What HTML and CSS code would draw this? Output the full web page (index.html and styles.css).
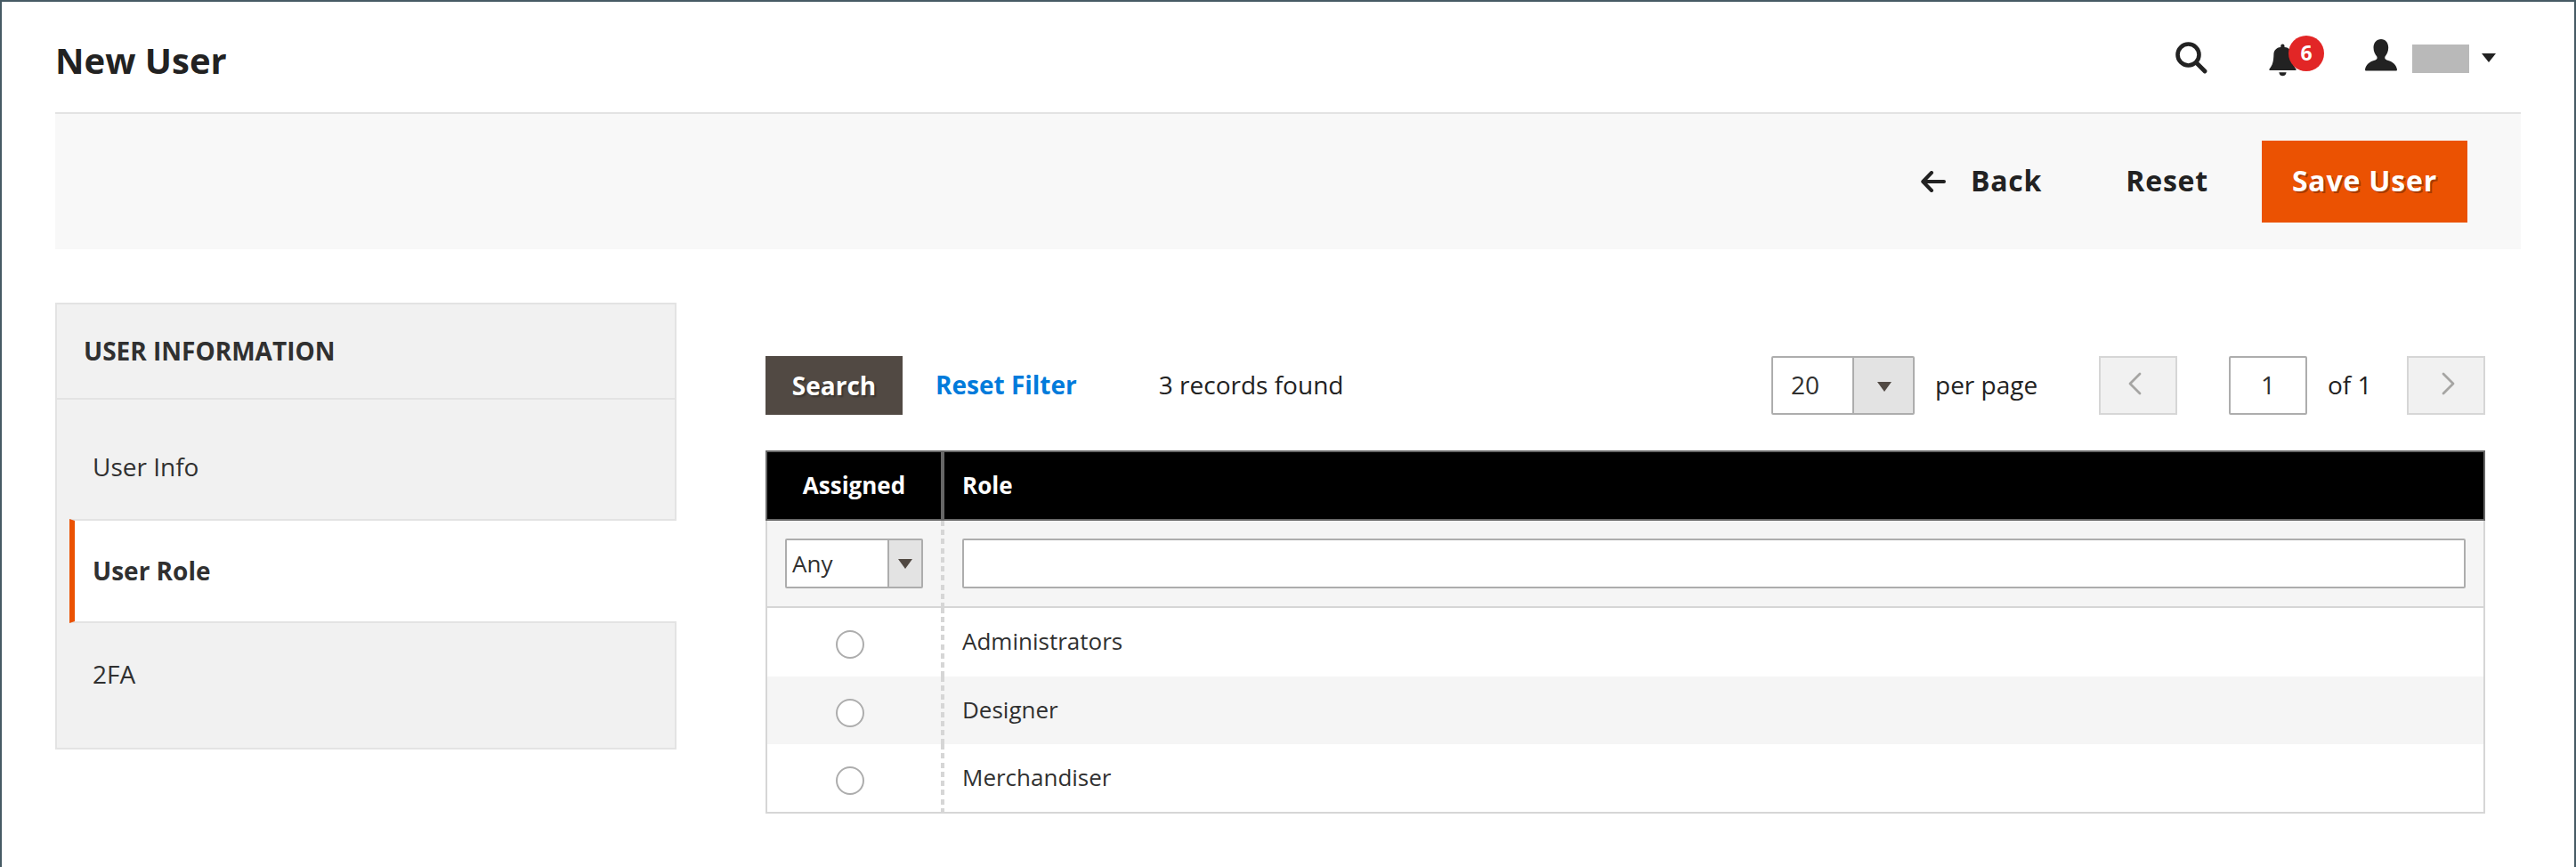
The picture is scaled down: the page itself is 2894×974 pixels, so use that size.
FILE: index.html
```html
<!DOCTYPE html>
<html lang="en">
<head>
<meta charset="utf-8">
<title>New User</title>
<link rel="stylesheet" href="styles.css">
</head>
<body>
<div class="page">
  <header class="header">
    <h1 class="title">New User</h1>
    <div class="tools">
      <svg class="icon-search" viewBox="0 0 36 36"><circle cx="14.5" cy="14.5" r="12" fill="none" stroke="currentColor" stroke-width="4.6"/><path d="M23.5 23.5L33 33" stroke="currentColor" stroke-width="4.8" stroke-linecap="round"/></svg>
      <div class="bell">
        <svg class="icon-bell" viewBox="0 0 32 37"><path d="M13.3 4V2.2Q13.3 0.5 15.4 0.5T17.5 2.2V4C23 4.4 25.3 8 25.5 12C25.8 20 27 24.500 30.500 28.500V30H0.500V28.500C4 24.500 5.200 20 5.400 12C5.600 8 8 4.400 13.300 4Z" fill="currentColor"/><path d="M11.300 32.200H19.600C19 35.200 17.500 36.200 15.400 36.200S12 35.200 11.300 32.200Z" fill="currentColor"/></svg>
        <span class="badge">6</span>
      </div>
      <svg class="icon-user" viewBox="0 0 36 36"><path d="M18 0C23 0 26.200 4 26.200 9.500C26.200 14 24.500 17 22.500 19.500C21.800 21.500 22.500 22.800 24.500 23.500C31 25 35.500 29 36 34.500Q36 35.500 35 35.500H1Q0 35.500 0 34.500C0.500 29 5 25 11.500 23.500C13.500 22.800 14 21.500 13.300 19.500C11.300 17 9.500 14 9.500 9.500C9.500 4 13 0 18 0Z" fill="currentColor"/></svg>
      <span class="username"></span>
      <svg class="caret" viewBox="0 0 16 10"><path d="M0 0H16L8 10Z" fill="currentColor"/></svg>
    </div>
  </header>

  <div class="actions">
    <button class="action back"><svg class="icon-back" viewBox="0 0 28 24"><path d="M12 2L2.300 12L12 22M3 12H26" fill="none" stroke="currentColor" stroke-width="4" stroke-linecap="round" stroke-linejoin="round"/></svg>Back</button>
    <button class="action reset">Reset</button>
    <button class="action save">Save User</button>
  </div>

  <div class="columns">
    <nav class="side">
      <div class="side-title">USER INFORMATION</div>
      <div class="side-list">
        <a class="side-item">User Info</a>
        <a class="side-item active">User Role</a>
        <a class="side-item">2FA</a>
      </div>
    </nav>

    <main class="main">
      <div class="toolbar">
        <button class="search">Search</button>
        <a class="reset-filter">Reset Filter</a>
        <span class="records">3 records found</span>
        <div class="pager">
          <div class="select limit"><span class="value">20</span><span class="arrow"><svg class="tri" viewBox="0 0 16 11"><path d="M0 0H16L8 11Z" fill="currentColor"/></svg></span></div>
          <span class="per-page">per page</span>
          <button class="nav prev"><svg class="chevron" viewBox="0 0 15 26"><path d="M13 2L2 13L13 24" fill="none" stroke="currentColor" stroke-width="2.800" stroke-linecap="round" stroke-linejoin="round"/></svg></button>
          <span class="current">1</span>
          <span class="of">of 1</span>
          <button class="nav next"><svg class="chevron" viewBox="0 0 15 26"><path d="M2 2L13 13L2 24" fill="none" stroke="currentColor" stroke-width="2.800" stroke-linecap="round" stroke-linejoin="round"/></svg></button>
        </div>
      </div>

      <div class="grid">
        <div class="row head"><div class="cell assigned">Assigned</div><div class="cell">Role</div></div>
        <div class="row filter">
          <div class="cell"><div class="select any"><span class="value">Any</span><span class="arrow"><svg class="tri" viewBox="0 0 16 11"><path d="M0 0H16L8 11Z" fill="currentColor"/></svg></span></div></div>
          <div class="cell"><span class="field"></span></div>
        </div>
        <div class="row first"><div class="cell pick"><span class="radio"></span></div><div class="cell">Administrators</div></div>
        <div class="row even"><div class="cell pick"><span class="radio"></span></div><div class="cell">Designer</div></div>
        <div class="row last"><div class="cell pick"><span class="radio"></span></div><div class="cell">Merchandiser</div></div>
      </div>
    </main>
  </div>
</div>
</body>
</html>
```
FILE: styles.css
```css
* { box-sizing: border-box; }

body {
  margin: 0;
  background: #fff;
  font-family: "Open Sans", "Noto Sans", sans-serif;
  font-size: 28px;
  color: #303030;
}

button {
  margin: 0;
  padding: 0;
  border: 0;
  background: none;
  font: inherit;
  color: inherit;
}

svg { display: block; flex: none; }

.page {
  width: 2894px;
  height: 974px;
  border: 2px solid #465a64;
  border-bottom: 0;
  padding: 0 60px;
  overflow: hidden;
}

/* Header */
.header {
  display: flex;
  justify-content: space-between;
  height: 124px;
  color: #222;
}
.title {
  margin: 0;
  padding-top: 6px;
  font-size: 40px;
  font-weight: 700;
  line-height: 120px;
}
.tools {
  display: flex;
  align-items: flex-start;
  padding-right: 28px;
}
.icon-search { width: 36px; height: 36px; margin-top: 45px; }
.bell { position: relative; margin: 47px 0 0 69px; width: 62px; height: 37px; }
.icon-bell { width: 32px; height: 37px; }
.badge {
  position: absolute;
  left: 22px;
  top: -9px;
  width: 40px;
  height: 40px;
  border-radius: 50%;
  background: #e22626;
  color: #fff;
  font-size: 23px;
  font-weight: 700;
  line-height: 39px;
  text-align: center;
}
.icon-user { width: 36px; height: 36px; margin: 42px 0 0 46px; }
.username { width: 64px; height: 32px; margin: 48px 0 0 17px; background: #b9b9b9; }
.caret { width: 16px; height: 10px; margin: 58px 0 0 14px; }

/* Page actions */
.actions {
  display: flex;
  justify-content: flex-end;
  height: 154px;
  padding: 30px 60px 0 0;
  border-top: 2px solid #e3e3e3;
  background: #f8f8f8;
}
.action {
  display: flex;
  align-items: center;
  height: 92px;
  padding-bottom: 3px;
  font-size: 32px;
  font-weight: 700;
  letter-spacing: 0.8px;
  color: #222;
}
.icon-back { width: 28px; height: 24px; margin: 2px 28px 0 0; }
.reset { margin: 0 60px 0 94px; }
.save {
  justify-content: center;
  width: 231px;
  background: #eb5202;
  color: #fff;
  text-shadow: 2px 2px 0 rgba(0, 0, 0, 0.3);
}

.columns {
  display: flex;
  align-items: flex-start;
  padding-top: 60px;
}

/* Sidebar */
.side {
  width: 698px;
  height: 502px;
  border: 2px solid #e3e3e3;
  background: #f1f1f1;
}
.side-title {
  height: 107px;
  padding-left: 30px;
  border-bottom: 2px solid #e3e3e3;
  font-weight: 700;
  line-height: 105px;
}
.side-list { padding: 18px 0 0 14px; margin-right: -2px; }
.side-item {
  display: block;
  height: 116px;
  padding-left: 26px;
  line-height: 115px;
}
.side-item.active {
  height: 117px;
  padding-left: 20px;
  border: solid #e3e3e3;
  border-width: 2px 0;
  background: #fff;
  font-weight: 700;
  line-height: 113px;
  border-left: 6px solid #eb5202;
}

/* Grid toolbar */
.main { width: 1932px; margin: 60px 0 0 100px; }
.toolbar { display: flex; height: 66px; line-height: 65px; color: #222; }
.search {
  width: 154px;
  background: #514943;
  color: #fff;
  font-weight: 700;
  line-height: 65px;
  text-shadow: 2px 2px 2px rgba(0, 0, 0, 0.3);
}
.reset-filter { margin-left: 37px; color: #007bdb; font-weight: 700; }
.records { margin-left: 92px; }
.pager { display: flex; margin-left: auto; }

.select {
  display: flex;
  border: 2px solid #adadad;
  border-radius: 2px;
  background: #fff;
  color: #303030;
}
.value { flex: 1; }
.arrow {
  display: flex;
  align-items: center;
  justify-content: center;
  border-left: 2px solid #adadad;
  background: #e3e3e3;
  color: #514943;
}
.tri { width: 16px; height: 11px; }
.limit { width: 161px; line-height: 61px; }
.limit .value { padding-left: 20px; }
.limit .arrow { width: 68px; padding: 3px 0 0 2px; }
.per-page { width: 184px; margin-left: 23px; }
.nav {
  display: flex;
  justify-content: center;
  width: 88px;
  height: 66px;
  padding-top: 16px;
  border: 2px solid #d6d6d6;
  background: #f1f1f1;
  color: #a6a5a3;
}
.prev .chevron { margin-right: 7px; }
.next .chevron { margin-left: 5px; }
.chevron { width: 15px; height: 26px; }
.current {
  width: 88px;
  margin-left: 58px;
  border: 2px solid #adadad;
  border-radius: 2px;
  color: #303030;
  line-height: 61px;
  text-align: center;
}
.of { width: 89px; margin-left: 23px; }

/* Grid */
.grid { margin-top: 40px; font-size: 26px; }
.row {
  display: grid;
  grid-template-columns: 201px 1fr;
  height: 76px;
  border: 0 solid #d6d6d6;
  border-width: 0 2px;
  line-height: 75px;
  --step: 10px;
}
.row > .cell:first-child { padding-right: 4px; margin-left: -2px; }
.row > .cell:last-child { padding-left: 20px; margin-left: -2px; }
.row:not(.head) > .cell:first-child {
  background: repeating-linear-gradient(#d6d6d6 0 6px, transparent 6px var(--step)) right 2px top / 4px 100% no-repeat;
}
.head {
  height: 79px;
  border: 2px solid #666;
  background: #000;
  color: #fff;
  font-weight: 700;
}
.row.head > .assigned { text-align: center; border-right: 4px solid #666; margin: 0 2px 0 0; padding: 0; }
.filter { height: 98px; background: linear-gradient(#d6d6d6, #d6d6d6) bottom / 100% 2px no-repeat #f5f5f5; --step: 10.222px; }
.first { height: 77px; --step: 10.143px; }
.even { background: #f5f5f5; }
.last { height: 78px; border-bottom-width: 2px; --step: 10.286px; }
.any { width: 155px; height: 56px; margin: 20px 0 0 22px; line-height: 53px; }
.any .value { padding-left: 6px; }
.any .arrow { width: 38px; }
.field {
  display: block;
  height: 56px;
  margin: 20px 20px 0 0;
  border: 2px solid #adadad;
  border-radius: 2px;
  background: #fff;
}
.row > .pick:first-child { padding: 25px 13px 0 0; }
.radio {
  display: block;
  width: 32px;
  height: 32px;
  margin: 0 auto;
  border: 2px solid #adadad;
  border-radius: 50%;
  background: #fff;
}
```
